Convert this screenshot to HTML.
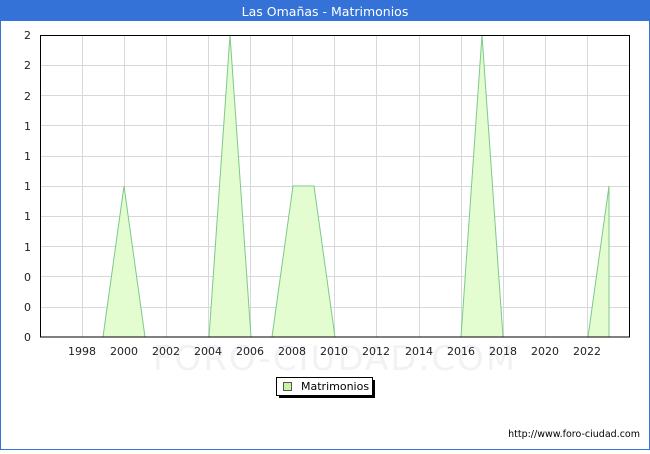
<!DOCTYPE html><html><head><style>
body{margin:0;width:650px;height:450px;overflow:hidden;background:#fff;font-family:"DejaVu Sans","Liberation Sans",sans-serif}
</style></head><body>
<svg width="650" height="450" xmlns="http://www.w3.org/2000/svg" font-family="DejaVu Sans, Liberation Sans, sans-serif">
<rect x="0.5" y="0.5" width="649" height="449" fill="#fff" stroke="#3472d8"/>
<rect x="0" y="0" width="650" height="21" fill="#3472d8"/>
<text x="325" y="16" text-anchor="middle" font-size="12.5" fill="#fff">Las Omañas - Matrimonios</text>
<text x="335" y="370" text-anchor="middle" font-size="34" fill="#f2f2f5" letter-spacing="2">FORO-CIUDAD.COM</text>
<g stroke="#d8d8d8" stroke-width="1">
<line x1="40" y1="65.5" x2="630" y2="65.5"/><line x1="40" y1="95.5" x2="630" y2="95.5"/><line x1="40" y1="125.5" x2="630" y2="125.5"/><line x1="40" y1="156.5" x2="630" y2="156.5"/><line x1="40" y1="186.5" x2="630" y2="186.5"/><line x1="40" y1="216.5" x2="630" y2="216.5"/><line x1="40" y1="246.5" x2="630" y2="246.5"/><line x1="40" y1="276.5" x2="630" y2="276.5"/><line x1="40" y1="307.5" x2="630" y2="307.5"/>
<line x1="82.5" y1="35" x2="82.5" y2="337"/><line x1="124.5" y1="35" x2="124.5" y2="337"/><line x1="166.5" y1="35" x2="166.5" y2="337"/><line x1="208.5" y1="35" x2="208.5" y2="337"/><line x1="250.5" y1="35" x2="250.5" y2="337"/><line x1="292.5" y1="35" x2="292.5" y2="337"/><line x1="334.5" y1="35" x2="334.5" y2="337"/><line x1="376.5" y1="35" x2="376.5" y2="337"/><line x1="419.5" y1="35" x2="419.5" y2="337"/><line x1="461.5" y1="35" x2="461.5" y2="337"/><line x1="503.5" y1="35" x2="503.5" y2="337"/><line x1="545.5" y1="35" x2="545.5" y2="337"/><line x1="587.5" y1="35" x2="587.5" y2="337"/>
</g>
<g fill="#e4fdd0" stroke="#7cc98c" stroke-width="1">
<polygon points="103,337 124,186 145,337"/>
<polygon points="209,337 230,35 251,337"/>
<polygon points="272,337 293,186 314,186 335,337"/>
<polygon points="461,337 482,35 503,337"/>
<polygon points="588,337 609,186 609,337"/>
</g>
<rect x="40.5" y="35.5" width="589" height="301.5" fill="none" stroke="#000"/>
<g font-size="11" fill="#222" text-anchor="end">
<text x="31" y="39">2</text><text x="31" y="69">2</text><text x="31" y="100">2</text><text x="31" y="130">1</text><text x="31" y="160">1</text><text x="31" y="190">1</text><text x="31" y="220">1</text><text x="31" y="251">1</text><text x="31" y="281">0</text><text x="31" y="311">0</text><text x="31" y="341">0</text>
</g>
<g font-size="11" fill="#222" text-anchor="middle">
<text x="82" y="355">1998</text><text x="124" y="355">2000</text><text x="166" y="355">2002</text><text x="208" y="355">2004</text><text x="250" y="355">2006</text><text x="292" y="355">2008</text><text x="334" y="355">2010</text><text x="376" y="355">2012</text><text x="419" y="355">2014</text><text x="461" y="355">2016</text><text x="503" y="355">2018</text><text x="545" y="355">2020</text><text x="587" y="355">2022</text>
</g>
<rect x="279" y="380" width="96" height="18" fill="#000"/>
<rect x="276.5" y="377.5" width="96" height="18" fill="#fff" stroke="#000"/>
<rect x="283.5" y="382.5" width="8" height="8" fill="#c8f5a0" stroke="#555"/>
<text x="301" y="390" font-size="11" fill="#000">Matrimonios</text>
<text x="640" y="437" text-anchor="end" font-size="9.5" fill="#000">http://www.foro-ciudad.com</text>
</svg>
</body></html>
